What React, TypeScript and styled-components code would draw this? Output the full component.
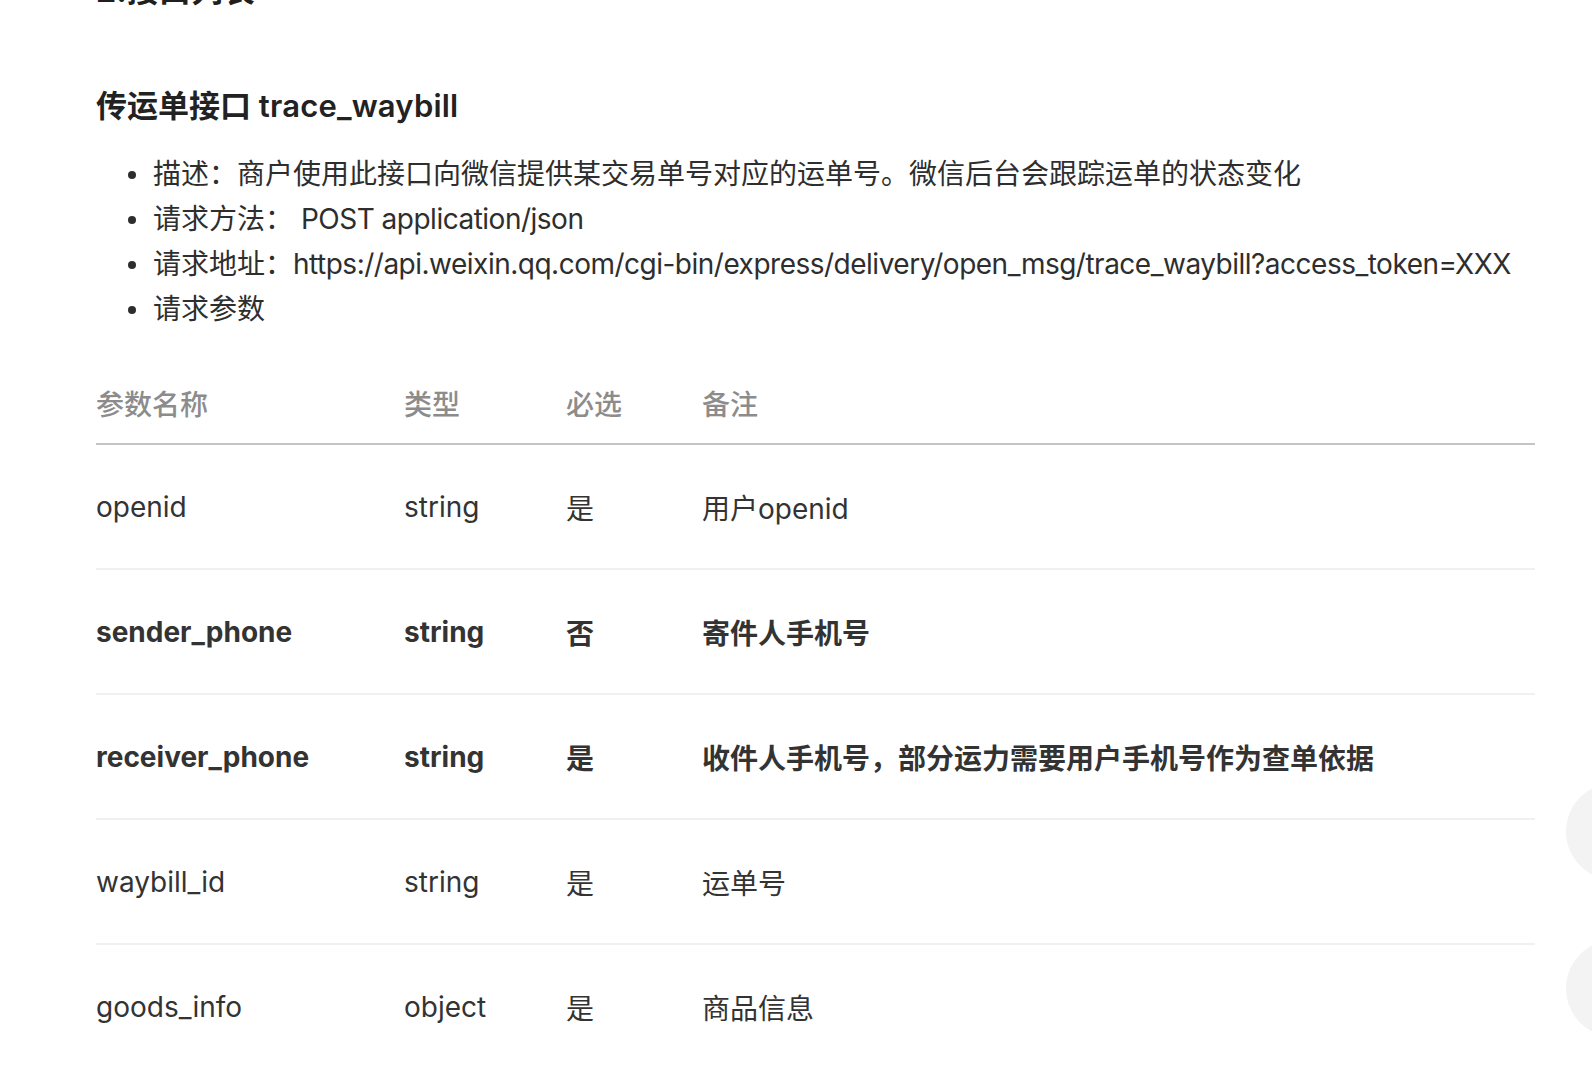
import React from 'react';
import styled, {createGlobalStyle} from 'styled-components';

const GlobalStyle = createGlobalStyle`
  html, body {
    margin: 0;
    padding: 0;
    background: #FFFFFF;
    overflow: hidden;
  }

  body {
    font-family: Inter, "Noto Sans CJK SC", sans-serif;
    color: #333333;
  }

  * {
    box-sizing: border-box;
  }
`;

const Page = styled.div`
  width: 1592px;
  height: 1068px;
  padding: 0 57px 0 96px;
  overflow: hidden;
`;

const SectionTitle = styled.h2`
  margin: -31px 0 0;
  font-size: 32px;
  line-height: 44px;
  font-weight: 700;
  color: #1F1F1F;
`;

const ApiTitle = styled.h3`
  margin: 71px 0 0;
  font-size: 31px;
  line-height: 44px;
  font-weight: 600;
  color: #222222;

  span {
    letter-spacing: 0.2px;
  }
`;

const InfoList = styled.ul`
  list-style: none;
  margin: 24px 0 0;
  padding: 0 0 0 57px;
`;

const InfoItem = styled.li`
  position: relative;
  font-size: 28px;
  line-height: 45px;
  white-space: nowrap;
  color: #2E2E2E;

  &::before {
    content: "";
    position: absolute;
    left: -25px;
    top: 19px;
    width: 8px;
    height: 8px;
    border-radius: 50%;
    background: #2E2E2E;
  }
`;

const Latin = styled.span`
  letter-spacing: -0.5px;
`;

const Table = styled.div`
  margin-top: 31px;
  width: 100%;
`;

const Row = styled.div<{ $head?: boolean; $bold?: boolean }>`
  display: grid;
  grid-template-columns: 308px 162px 136px 1fr;
  align-items: center;
  height: ${({$head}) => ($head ? '82px' : '125px')};
  border-bottom: 2px solid ${({$head}) => ($head ? '#C4C4C4' : '#F0F0F0')};
  font-size: 28px;
  color: ${({$head}) => ($head ? '#8C8C8C' : '#333333')};
  font-weight: ${({$head, $bold}) => ($head ? 500 : $bold ? 650 : 400)};
`;

const Cell = styled.div`
  white-space: nowrap;
`;

const SideButtons = styled.div`
  position: fixed;
  left: 1566px;
  top: 783px;
  display: flex;
  flex-direction: column;
  gap: 60px;
`;

const SideButton = styled.div`
  width: 97px;
  height: 97px;
  border-radius: 50%;
  background: #F3F3F3;
`;

type Param = {
  name: string;
  type: string;
  required: string;
  note: string;
  bold?: boolean;
};

const params: Param[] = [
  {name: 'openid', type: 'string', required: '是', note: '用户openid'},
  {name: 'sender_phone', type: 'string', required: '否', note: '寄件人手机号', bold: true},
  {name: 'receiver_phone', type: 'string', required: '是', note: '收件人手机号，部分运力需要用户手机号作为查单依据', bold: true},
  {name: 'waybill_id', type: 'string', required: '是', note: '运单号'},
  {name: 'goods_info', type: 'object', required: '是', note: '商品信息'},
];

const App = () => {
  return (
    <>
      <GlobalStyle/>
      <Page>
        <SectionTitle>2.接口列表</SectionTitle>
        <ApiTitle>传运单接口 <span>trace_waybill</span></ApiTitle>
        <InfoList>
          <InfoItem>描述：商户使用此接口向微信提供某交易单号对应的运单号。微信后台会跟踪运单的状态变化</InfoItem>
          <InfoItem>请求方法： <Latin>POST application/json</Latin></InfoItem>
          <InfoItem>请求地址：<Latin>https://api.weixin.qq.com/cgi-bin/express/delivery/open_msg/trace_waybill?access_token=XXX</Latin></InfoItem>
          <InfoItem>请求参数</InfoItem>
        </InfoList>
        <Table>
          <Row $head>
            <Cell>参数名称</Cell>
            <Cell>类型</Cell>
            <Cell>必选</Cell>
            <Cell>备注</Cell>
          </Row>
          {params.map((p) => (
            <Row key={p.name} $bold={p.bold}>
              <Cell>{p.name}</Cell>
              <Cell>{p.type}</Cell>
              <Cell>{p.required}</Cell>
              <Cell>{p.note}</Cell>
            </Row>
          ))}
        </Table>
      </Page>
      <SideButtons>
        <SideButton/>
        <SideButton/>
      </SideButtons>
    </>
  );
};

export default App;
